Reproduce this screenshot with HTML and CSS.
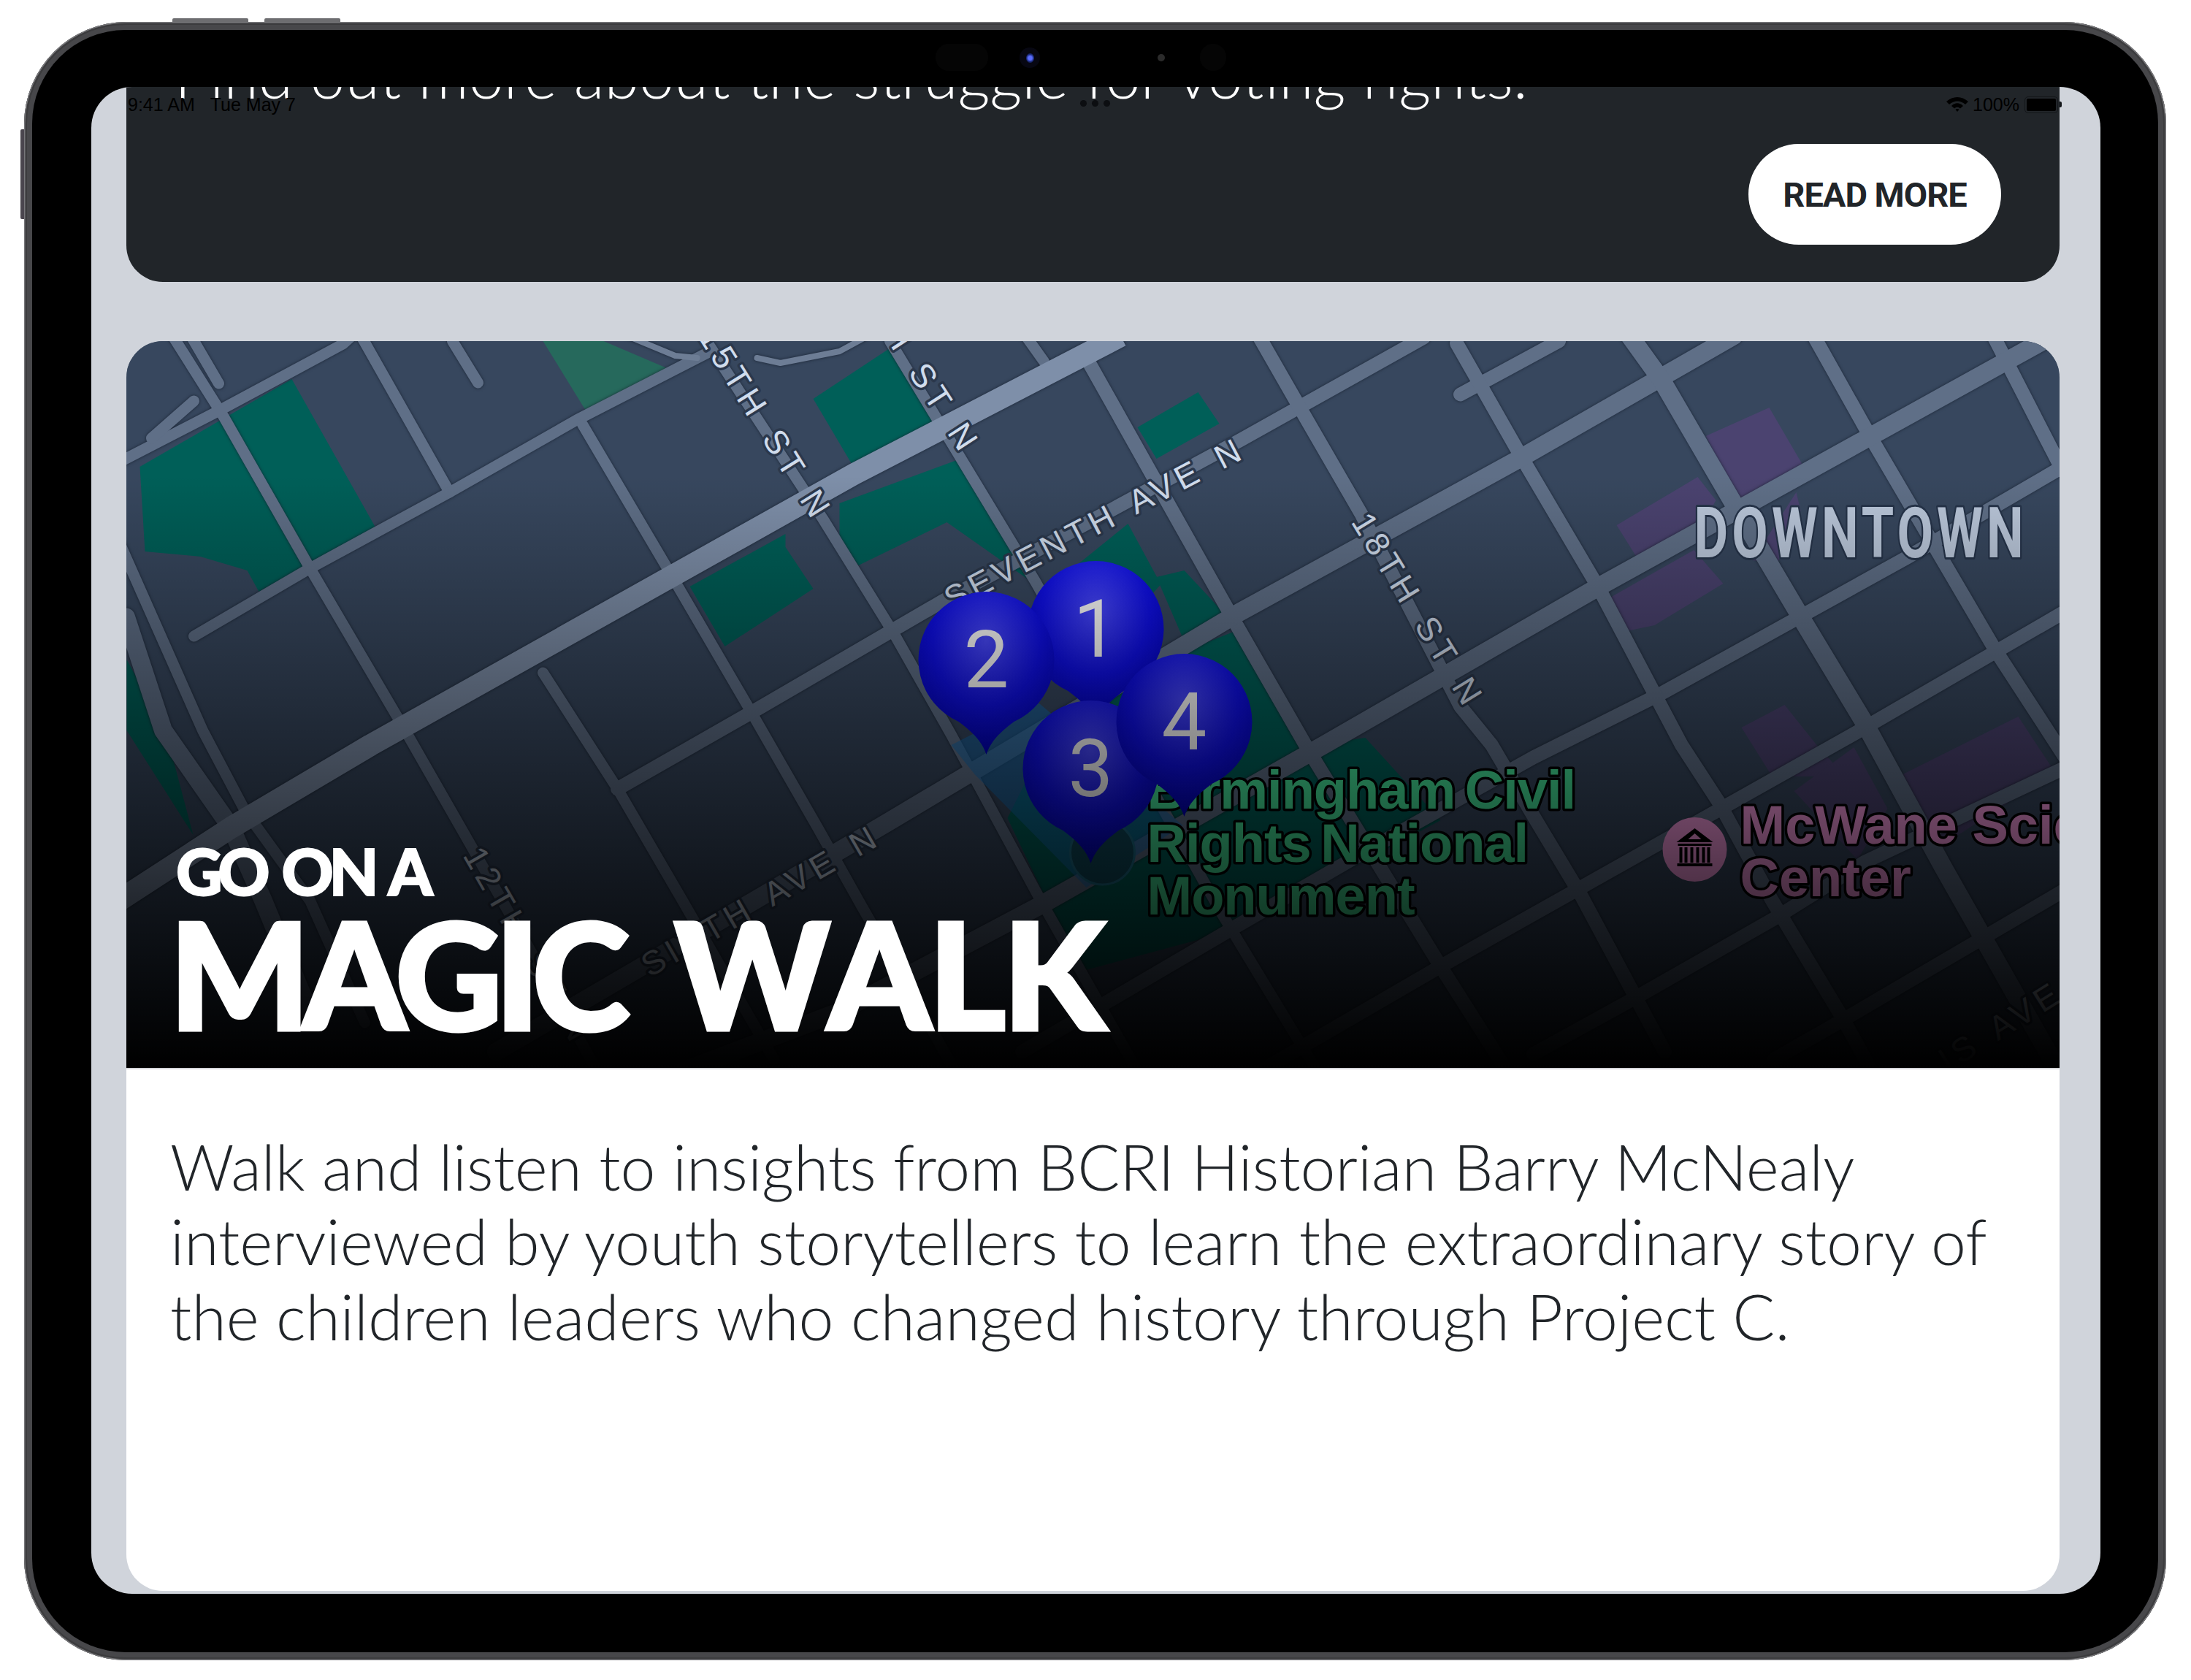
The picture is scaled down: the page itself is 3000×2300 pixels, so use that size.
FILE: index.html
```html
<!DOCTYPE html>
<html lang="en">
<head>
<meta charset="utf-8">
<title>Magic Walk</title>
<link rel="stylesheet" href="styles.css">
</head>
<body>
<div class="device">
  <span class="btn btn-top btn-a"></span>
  <span class="btn btn-top btn-b"></span>
  <span class="btn btn-side"></span>
  <div class="bezel">
    <span class="sensor sensor-a"></span>
    <span class="camera"><i></i></span>
    <span class="speck"></span>
    <span class="sensor sensor-b"></span>
    <div class="screen">
      <div class="status">
        <div class="status-left"><span>9:41 AM</span><span>Tue May 7</span></div>
        <div class="dots"><i></i><i></i><i></i></div>
        <div class="status-right">
          <svg class="wifi" viewBox="0 0 32 22"><path d="M1 7 C10 -1 22 -1 31 7 L27 11 C20 5 12 5 5 11 Z"/><path d="M8 13 C13 8 19 8 24 13 L20 16.500 C17.500 14 14.500 14 12 16.500 Z"/><path d="M13.500 18 C15 16.800 17 16.800 18.500 18 L16 21 Z"/></svg>
          <span>100%</span>
          <span class="battery"><i></i></span>
        </div>
      </div>

      <section class="card-dark">
        <p class="dark-text">Find out more about the struggle for voting rights.</p>
        <a class="read-more">READ MORE</a>
      </section>

      <section class="card-walk">
        <div class="map">
          <svg class="map-svg" viewBox="174 467 2646 995" aria-hidden="true">
            <defs>
              <radialGradient id="pin" cx="50%" cy="30%" r="72%">
                <stop offset="0" stop-color="#4a4aff"/>
                <stop offset=".55" stop-color="#1010ea"/>
                <stop offset="1" stop-color="#0000b4"/>
              </radialGradient>
              <path id="pinShape" d="M0 130 C-6 112 -18 100 -38 85 A93 93 0 1 1 38 85 C18 100 6 112 0 130 Z"/>
            </defs>
            <rect class="land" x="174" y="467" width="2646" height="995"/>

            <g class="park">
              <path d="M192 639 L400 519 L514 721 L355 810 L339 781 L275 762 L199 755 Z"/>
              <path class="park-light" d="M744 467 L827 467 L916 505 L808 571 Z"/>
              <path d="M1114 546 L1217 478 L1284 574 L1169 639 Z"/>
              <path d="M1076 731 L1076 749 L1114 806 L993 885 L945 803 Z"/>
              <path d="M1641 537 L1670 580 L1584 628 L1558 585 Z"/>
              <path d="M1150 689 L1316 628 L1386 742 L1430 810 L1545 717 L1590 800 L1500 900 L1418 800 L1297 715 L1176 774 L1150 742 Z"/>
              <path d="M1622 781 L1584 790 L1622 878 L1679 842 Z"/>
              <path d="M1692 864 L1800 1020 L1870 1010 L1973 1123 L1692 1273 L1480 1330 L1380 1120 L1430 1020 L1600 900 Z"/>
              <path d="M174 903 L227 1000 L265 1143 L174 1000 Z"/>
            </g>
            <g class="campus">
              <path d="M2423 558 L2472 642 L2385 689 L2336 597 Z"/>
              <path d="M2325 653 L2350 685 L2320 739 L2244 767 L2214 719 Z"/>
              <path d="M2460 674 L2466 699 L2434 771 L2400 767 Z"/>
              <path d="M2200 821 L2320 753 L2360 799 L2266 856 L2228 864 Z"/>
              <path d="M2444 965 L2488 1020 L2527 1063 L2427 1063 L2385 996 Z"/>
              <path d="M2457 1083 L2539 1023 L2585 1107 L2544 1177 Z"/>
              <path d="M2600 1063 L2764 981 L2814 1057 L2656 1160 Z"/>
            </g>

            <g class="roads">
              <path d="M495 460 L616 674"/>
              <path d="M266 871 L425 778 L616 674 L790 575 L975 480"/>
              <path d="M237 460 L307 571 L425 778 L553 996 L645 1157 L760 1360 L820 1470"/>
              <path d="M798 581 L916 781 L1031 978 L1120 1133 L1180 1240 L1260 1380 L1310 1470"/>
              <path d="M744 921 L846 1080 L935 1233 L1060 1450"/>
              <path d="M960 455 L1127 710 L1226 870 L1303 1006 L1424 1230 L1560 1470"/>
              <path d="M1219 467 L1418 796 L1673 1250 L1800 1460"/>
              <path d="M1405 460 L1430 495"/>
              <path d="M165 632 L297 564 L470 471 L480 462"/>
              <path d="M208 600 L266 549"/>
              <path d="M262 460 L300 525"/>
              <path d="M620 467 L655 524"/>
              <path d="M165 745 L278 1000 L336 1110 L425 1233 L500 1400"/>
              <path class="r-hair" d="M860 460 L925 487 L955 490"/>
              <path class="r-hair" d="M1037 490 L1069 497 L1150 481 L1185 462"/>
              <path class="r-wide" d="M846 1080 L1037 971 L1293 822 L1698 603 L1934 471 L1950 462"/>
              <path class="r-wide" d="M2135 467 L2000 540"/>
              <path class="r-wide" d="M2830 636 L2612 763 L2276 949 L2100 1037 L1880 1160 L1690 1270 L1400 1440"/>
              <path class="r-wide" d="M2830 836 L2542 1003 L2151 1223 L1973 1323 L1720 1470"/>
              <path class="r-wide" d="M2830 1050 L2554 1180 L2431 1257 L2238 1367 L2100 1443"/>
              <path class="r-wide" d="M2830 1217 L2523 1397 L2430 1450"/>
              <path class="r-wide" d="M1488 490 L1692 853 L1788 1020 L1973 1323 L2060 1460"/>
              <path class="r-wide" d="M1724 460 L1775 549 L1864 703 L2000 967 L2043 1020 L2100 1117 L2166 1227 L2280 1440"/>
              <path class="r-wide" d="M1995 470 L2081 621 L2190 806 L2303 1020 L2355 1100 L2427 1233 L2523 1393 L2560 1460"/>
              <path class="r-wide" d="M2484 460 L2558 592 L2623 703 L2732 889 L2830 1040"/>
              <path class="r-wide" d="M2730 460 L2825 645"/>
              <path class="r-mid" d="M2374 460 L2081 628 L1698 838 L1214 1127 L890 1317 L680 1440"/>
              <path class="r-mid" d="M2810 460 L2190 803 L1813 1020 L1424 1240 L1150 1385 L900 1480"/>
              <path class="r-mid" d="M2232 460 L2276 521 L2374 689 L2471 853 L2553 989 L2661 1187 L2763 1367 L2810 1450"/>
              <path class="r-mid" d="M173 845 L224 1000 L317 1133 L361 1233 L430 1400"/>
              <path class="r-main" d="M1535 460 L1170 649 L508 1020 L317 1133 L165 1232"/>
            </g>

            <path class="zone" d="M1303 1020 L1420 960 L1620 1130 L1488 1215 L1335 1060 Z"/>
            <circle class="poi-ring" cx="1510" cy="1167" r="44"/>

            <g class="labels">
              <text class="lbl" transform="translate(965 453) rotate(58)">15TH ST N</text>
              <text class="lbl" transform="translate(1163 364) rotate(57)">16TH ST N</text>
              <text class="lbl lbl-tight" transform="translate(1298 826) rotate(-27.600)">SEVENTH AVE N</text>
              <text class="lbl" transform="translate(1860 708) rotate(58.600)">18TH ST N</text>
              <text class="lbl" transform="translate(884 1328) rotate(-30)">SIXTH AVE N</text>
              <text class="lbl" transform="translate(644 1165) rotate(60)">12TH ST N</text>
              <text class="lbl" transform="translate(2661 1458) rotate(-32)">IS AVE N</text>
              <text class="downtown" transform="translate(2320 763) scale(.74 1)">DOWNTOWN</text>
              <text class="poi poi-green"><tspan x="1571" y="1107">Birmingham Civil</tspan><tspan x="1571" y="1180">Rights National</tspan><tspan x="1571" y="1252">Monument</tspan></text>
              <text class="poi poi-pink"><tspan x="2383" y="1155">McWane Science</tspan><tspan x="2383" y="1227">Center</tspan></text>
            </g>

            <circle class="poi-dot" cx="2321" cy="1163" r="44"/>
            <g class="poi-icon">
              <path d="M2321 1134 L2346 1153 L2296 1153 Z M2321 1141 L2312 1149 L2330 1149 Z" fill-rule="evenodd"/>
              <rect x="2298" y="1155" width="46" height="3"/>
              <rect x="2300" y="1160" width="4" height="21"/>
              <rect x="2307" y="1160" width="4" height="21"/>
              <rect x="2315" y="1160" width="4" height="21"/>
              <rect x="2323" y="1160" width="4" height="21"/>
              <rect x="2331" y="1160" width="4" height="21"/>
              <rect x="2338" y="1160" width="4" height="21"/>
              <rect x="2297" y="1182" width="48" height="4"/>
            </g>

            <g class="pin" transform="translate(1501 861)"><use href="#pinShape"/><text y="38">1</text></g>
            <g class="pin" transform="translate(1494 1052)"><use href="#pinShape"/><text y="38">3</text></g>
            <g class="pin" transform="translate(1351 903)"><use href="#pinShape"/><text y="38">2</text></g>
            <g class="pin" transform="translate(1622 988)"><use href="#pinShape"/><text y="38">4</text></g>
          </svg>
          <h2 class="map-title"><span class="title-small">GO ON A</span><span class="title-big"><span class="word-magic">MAGIC</span> <span class="word-walk">WALK</span></span></h2>
        </div>
        <div class="walk-body">
          <p>Walk and listen to insights from BCRI Historian Barry McNealy interviewed by youth storytellers to learn the extraordinary story of the children leaders who changed history through Project C.</p>
        </div>
      </section>
    </div>
  </div>
</div>
</body>
</html>
```
FILE: styles.css
```css
* { box-sizing: border-box; }
html, body { margin: 0; background: #fff; }
body { width: 3000px; height: 2300px; overflow: hidden; padding: 30px 34px 0 33px; font-family: "Lato", "Liberation Sans", sans-serif; }

.device {
  position: relative;
  height: 2243px;
  padding: 11px;
  border-radius: 140px;
  background: #47474a;
  box-shadow: inset 0 0 0 1.500px #77777a, inset 0 0 0 4px #3c3c3e;
}
.btn { position: absolute; background: #6d6d70; }
.btn-top { top: -5px; height: 5px; width: 104px; border-radius: 2px 2px 0 0; }
.btn-a { left: 203px; }
.btn-b { left: 329px; }
.btn-side { left: -5px; top: 147px; width: 5px; height: 123px; border-radius: 2px 0 0 2px; background: #4a464e; }

.bezel {
  position: relative;
  height: 100%;
  padding: 78px 79px 80px 81px;
  border-radius: 128px;
  background: #000;
}
.sensor { position: absolute; top: 19px; height: 37px; border-radius: 18px; background: #050505; }
.sensor-a { left: 1237px; width: 72px; }
.sensor-b { left: 1599px; width: 36px; }
.camera {
  position: absolute; left: 1352px; top: 24px; width: 28px; height: 28px; border-radius: 50%;
  background: #070712; display: flex; align-items: center; justify-content: center;
}
.camera i { width: 11px; height: 13px; border-radius: 50%; background: radial-gradient(circle, #5a6cff 0 30%, #1b2a78 60%, #0a1030 100%); }
.speck { position: absolute; left: 1541px; top: 33px; width: 10px; height: 10px; border-radius: 50%; background: #2b2b2b; }

.screen {
  position: relative;
  height: 100%;
  display: flex;
  flex-direction: column;
  gap: 81px;
  padding: 0 56px 4px 48px;
  border-radius: 56px;
  overflow: hidden;
  background: #d0d4db;
}

.status {
  position: absolute; left: 50px; right: 58px; top: 10px; z-index: 3;
  height: 28px;
  display: flex; align-items: center; justify-content: space-between;
  font-family: "Liberation Sans", sans-serif; font-size: 25px; color: #000;
}
.status-left { display: flex; gap: 21px; }
.dots { display: flex; gap: 7px; position: absolute; left: 1304px; top: 8px; }
.dots i { width: 9px; height: 9px; border-radius: 50%; background: #0c0e11; }
.status-right { display: flex; align-items: center; gap: 5px; }
.wifi { width: 32px; height: 22px; }
.battery { position: relative; width: 46px; height: 23px; margin-left: 2px; border: 1.500px solid #14171a; border-radius: 5px; padding: 2px; }
.battery i { display: block; height: 100%; border-radius: 2px; background: #000; }
.battery::after { content: ""; position: absolute; right: -6px; top: 6px; width: 3px; height: 8px; border-radius: 0 2px 2px 0; background: #14171a; }

.card-dark {
  flex: none;
  height: 267px;
  display: flex;
  flex-direction: column;
  padding: 0 80px 0 66px;
  border-radius: 0 0 50px 50px;
  overflow: hidden;
  background: #212529;
}
.dark-text {
  margin: -68px 0 0;
  height: 146px;
  font-size: 86px;
  line-height: 102px;
  font-weight: 300;
  color: #fff;
  white-space: nowrap;
}
.read-more {
  align-self: flex-end;
  width: 346px;
  height: 138px;
  border-radius: 69px;
  display: flex;
  align-items: center;
  justify-content: center;
  background: #fff;
  color: #212529;
  font-family: "Roboto", "Liberation Sans", sans-serif;
  font-weight: 700;
  font-size: 47px;
  letter-spacing: -1px;
}

.card-walk {
  flex: 1;
  display: flex;
  flex-direction: column;
  border-radius: 50px;
  overflow: hidden;
  background: #fff;
}
.map {
  position: relative;
  flex: none;
  height: 995px;
  background: #3a4a60;
}
.map::after {
  content: "";
  position: absolute;
  inset: 0;
  background: linear-gradient(to bottom, rgba(0,0,0,0) 18.500%, #000 100%);
}
.map-svg { display: block; width: 100%; height: 100%; }
.land { fill: #37475e; }
.park path { fill: #005f58; }
.park .park-light { fill: #26695c; }
.campus path { fill: #4b4370; }
.roads { fill: none; stroke: #5f6f87; stroke-width: 15; stroke-linecap: round; stroke-linejoin: round; filter: drop-shadow(0 0 2px rgba(18,26,40,.8)); }
.roads .r-hair { stroke-width: 8; stroke: #6d7d95; }
.roads .r-wide { stroke-width: 19; }
.roads .r-mid { stroke-width: 25; stroke: #5f6f87; }
.roads .r-main { stroke-width: 30; stroke: #7e8fa9; stroke-linecap: butt; }
.zone { fill: rgba(20,110,180,.55); }
.poi-ring { fill: #0f4a5c; stroke: #1d6d88; stroke-width: 3; }

.lbl {
  font-family: "Liberation Sans", sans-serif;
  font-size: 46px;
  letter-spacing: 7px;
  word-spacing: 6px;
  fill: #d0dcec;
  stroke: #2b384c;
  stroke-width: 7px;
  stroke-linejoin: round;
  paint-order: stroke;
  dominant-baseline: middle;
}
.lbl-tight { letter-spacing: 6.400px; }
.downtown {
  font-family: "Roboto", "Liberation Sans", sans-serif;
  font-weight: 700;
  font-size: 97px;
  letter-spacing: 7px;
  fill: #bac7da;
  stroke: #26344a;
  stroke-width: 6px;
  stroke-linejoin: round;
  paint-order: stroke;
}
.poi {
  font-family: "Liberation Sans", sans-serif;
  font-weight: 700;
  font-size: 74px;
  stroke: #000;
  stroke-width: 7px;
  stroke-linejoin: round;
  paint-order: stroke;
}
.poi-green { fill: #46e89c; letter-spacing: -1px; word-spacing: -6px; }
.poi-pink { fill: #ff9fe6; }
.poi-dot { fill: #ff9fe6; }
.poi-icon { fill: #000; }
.pin use { fill: url(#pin); }
.pin text {
  font-family: "Roboto", "Liberation Sans", sans-serif;
  font-size: 110px;
  text-anchor: middle;
  fill: #fff;
}

.map-title {
  position: absolute;
  z-index: 2;
  left: 59px;
  bottom: 40px;
  margin: 0;
  display: flex;
  flex-direction: column;
  color: #fff;
  font-family: "Lato", "Liberation Sans", sans-serif;
  font-weight: 900;
}
.title-small { font-size: 88px; line-height: 100px; letter-spacing: -6.500px; word-spacing: 8px; margin-left: 9px; -webkit-text-stroke: 2px #fff; }
.title-big { display: flex; gap: 71px; font-size: 202px; line-height: 180px; -webkit-text-stroke: 5px #fff; }
.word-magic { letter-spacing: -10px; }
.word-walk { letter-spacing: -3.500px; font-kerning: none; }

.walk-body { padding: 82px 60px 0; border-top: 2px solid #d4d5d8; }
.walk-body p {
  margin: 0;
  font-size: 86px;
  line-height: 102.400px;
  font-weight: 300;
  color: #212529;
}
```
